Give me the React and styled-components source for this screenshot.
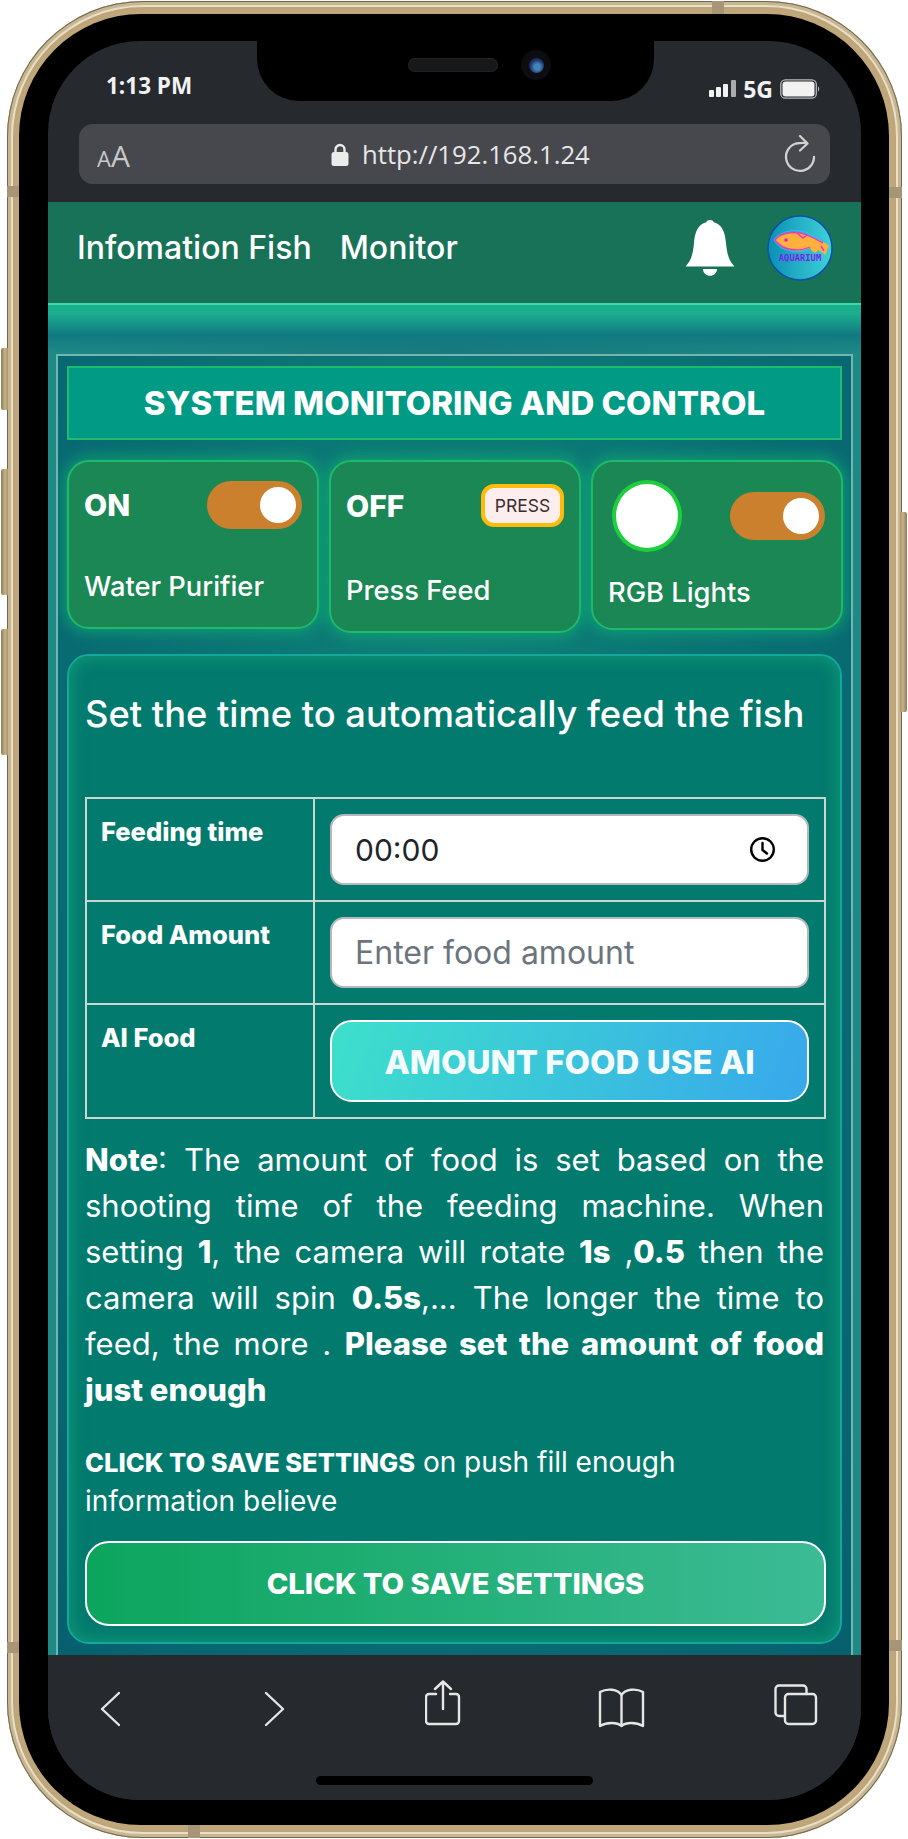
import React from "react";
import styled, { createGlobalStyle } from "styled-components";

const Global = createGlobalStyle`
  html, body { margin: 0; padding: 0; background: #fff; }
  * { box-sizing: border-box; }
  #root { width: 908px; height: 1839px; overflow: hidden; }
`;

const sans = `"Inter", "Liberation Sans", sans-serif`;
const ui = `"Open Sans", "Noto Sans", sans-serif`;

const Page = styled.div`
  position: relative;
  width: 908px;
  height: 1839px;
  padding: 1px 6px 1px 7px;
  background: #fff;
`;
const SideButton = styled.div`
  position: absolute;
  top: ${(p) => p.$top}px;
  ${(p) => (p.$right ? "right: 1px;" : "left: 1px;")}
  width: 7px;
  height: ${(p) => p.$h}px;
  background: linear-gradient(${(p) => (p.$right ? "270deg" : "90deg")}, #8d7d5f, #c9b285 60%, #a8936c);
  border-radius: ${(p) => (p.$right ? "0 2px 2px 0" : "2px 0 0 2px")};
`;
const Band = styled.div`
  position: absolute;
  z-index: 2;
  background: #a89578;
  ${(p) => p.$pos}
`;
const Frame = styled.div`
  width: 895px;
  height: 1837px;
  padding: 13px 13px 13px 12px;
  border-radius: 136px;
  background: #bfa77b;
  box-shadow: inset 0 0 0 1px #6d6755, inset 0 0 0 4px #c9b68f, inset 0 0 0 6px #e7dfca, inset 0 0 0 8px #bda577;
`;
const Bezel = styled.div`
  position: relative;
  height: 100%;
  padding: 27px 28px 25px 29px;
  border-radius: 122px;
  background: #000;
`;
const Screen = styled.div`
  height: 100%;
  display: flex;
  flex-direction: column;
  border-radius: 92px;
  overflow: hidden;
  background: #262a2e;
`;
const Notch = styled.div`
  position: absolute;
  top: 27px;
  left: 238px;
  width: 397px;
  height: 60px;
  display: flex;
  align-items: center;
  padding: 0 0 0 151px;
  gap: 23px;
  background: #000;
  border-radius: 0 0 42px 42px;
`;
const Speaker = styled.div`
  width: 90px;
  height: 14px;
  margin-top: -12px;
  border-radius: 7px;
  background: #16181a;
  box-shadow: inset 0 0 0 1px #202224;
`;
const Camera = styled.div`
  width: 30px;
  height: 30px;
  margin-top: -12px;
  border-radius: 50%;
  background: #0c0d10;
  display: flex;
  align-items: center;
  justify-content: center;
  &::after {
    content: "";
    width: 15px;
    height: 15px;
    border-radius: 50%;
    background: radial-gradient(circle at 55% 60%, #3e86b8 0 25%, #26366e 55%, #141a33 100%);
  }
`;
const TopBar = styled.div`
  height: 161px;
  flex: none;
  padding: 0 31px;
`;
const StatusRow = styled.div`
  height: 83px;
  display: flex;
  align-items: center;
  justify-content: space-between;
  padding: 5px 10px 0 27px;
  color: #f2f2f2;
  font: 700 22.500px ${ui};
`;
const StatusRight = styled.div`
  display: flex;
  align-items: center;
  gap: 7px;
  margin-top: 7px;
  font-size: 23px;
`;
const UrlBar = styled.div`
  position: relative;
  height: 60px;
  display: flex;
  align-items: center;
  justify-content: space-between;
  padding: 0 14px 0 18px;
  border-radius: 14px;
  background: #46484d;
  color: #e4e4e4;
`;
const Aa = styled.div`
  font: 400 30px ${ui};
  color: #c9c9c9;
  margin-top: 2px;
  small { font-size: 22px; }
`;
const Url = styled.div`
  position: absolute;
  left: 252px;
  top: 0;
  height: 100%;
  display: flex;
  align-items: center;
  gap: 13px;
  font: 400 25.700px ${ui};
  color: #e6e6e6;
`;
const Header = styled.header`
  height: 103px;
  flex: none;
  display: flex;
  align-items: center;
  padding: 0 28px 10px 29px;
  background: #187258;
  border-bottom: 2px solid #3bdca2;
`;
const NavLink = styled.a`
  margin-right: 28px;
  font: 500 32px ${sans};
  color: #fff;
`;
const HeaderRight = styled.div`
  margin-left: auto;
  display: flex;
  align-items: center;
  gap: 32px;
`;
const Content = styled.main`
  flex: 1;
  min-height: 0;
  padding: 49px 8px 0;
  background:
    linear-gradient(180deg, #1bae8e 0, #1bae8e 8px, #117a82 30px, rgba(17,122,130,0) 49px),
    linear-gradient(90deg, #1f8a85 0, #187a7c 50%, #1f8a85 100%);
`;
const Monitor = styled.section`
  height: 100%;
  padding: 10px 9px 0;
  background: radial-gradient(ellipse at 50% 30%, #0f8279 0, #06606f 100%);
  border: 2px solid #72b6b2;
  border-bottom: none;
  overflow: hidden;
`;
const Title = styled.h1`
  height: 74px;
  margin: 0;
  display: flex;
  align-items: center;
  justify-content: center;
  background: #019a85;
  border: 2px solid #1fbb6f;
  color: #fff;
  font: 800 33px ${sans};
  white-space: nowrap;
`;
const Cards = styled.div`
  display: grid;
  grid-template-columns: 252px 252px 252px;
  gap: 10px;
  align-items: start;
  margin-top: 20px;
`;
const Card = styled.article`
  padding: ${(p) => p.$pad};
  background: #1b8755;
  border: 2px solid #1fb96a;
  border-radius: 22px;
  box-shadow: 0 0 16px 3px rgba(16, 175, 115, 0.75);
`;
const CardRow = styled.div`
  display: flex;
  align-items: center;
  justify-content: space-between;
`;
const State = styled.span`
  font: 800 30px ${sans};
  color: #fff;
`;
const CardLabel = styled.div`
  margin-top: ${(p) => p.$gap}px;
  font: 500 27.300px/38px ${sans};
  color: #fff;
  white-space: nowrap;
`;
const Toggle = styled.div`
  width: 95px;
  height: 48px;
  display: flex;
  align-items: center;
  justify-content: flex-end;
  padding-right: 6px;
  border-radius: 24px;
  background: #cb802d;
  &::after {
    content: "";
    width: 36px;
    height: 36px;
    border-radius: 50%;
    background: #fff;
  }
`;
const PressButton = styled.button`
  width: 83px;
  height: 43px;
  padding: 0;
  border: 4px solid #ffbb0a;
  border-radius: 13px;
  background: #fdeeee;
  color: #3a2c2c;
  font: 400 17.500px ${sans};
`;
const Lamp = styled.div`
  width: 70px;
  height: 72px;
  margin-left: 4px;
  border-radius: 50%;
  background: #fff;
  border: 4px solid #1ecf3d;
`;
const Panel = styled.section`
  height: 990px;
  margin-top: 21px;
  padding: 0 16px;
  background: #027a6e;
  border: 2px solid #12a89a;
  border-radius: 22px;
  box-shadow: inset 0 0 16px 3px rgba(30, 175, 125, 0.5);
`;
const PanelTitle = styled.h2`
  margin: 0;
  height: 141px;
  padding-top: 36px;
  font: 500 36.300px/44px ${sans};
  color: #fff;
  white-space: nowrap;
`;
const Table = styled.table`
  width: 741px;
  border-collapse: collapse;
  table-layout: fixed;
  col:first-child { width: 228px; }
`;
const Th = styled.th`
  height: ${(p) => p.$h}px;
  padding: 18px 14px 12px;
  vertical-align: top;
  text-align: left;
  border: 2px solid #c9d6d2;
  font: 800 25.500px/30px ${sans};
  color: #fff;
`;
const Td = styled.td`
  padding: 15px 15px;
  vertical-align: top;
  border: 2px solid #c9d6d2;
`;
const FieldWrap = styled.div`
  position: relative;
`;
const Field = styled.input`
  display: block;
  width: 100%;
  height: 71px;
  padding: 0 23px;
  border: 2px solid #b5b9bd;
  border-radius: 14px;
  background: #fff;
  color: #212529;
  font: 400 ${(p) => p.$size}px ${sans};
  outline: none;
  &::placeholder { color: #6c757d; opacity: 1; }
`;
const ClockMark = styled.svg`
  position: absolute;
  top: 22px;
  right: 33px;
`;
const AiButton = styled.button`
  display: block;
  width: 100%;
  height: 82px;
  padding: 1px 0 0;
  border: 2px solid #fff;
  border-radius: 22px;
  background: linear-gradient(110deg, #3de0cb, #38a8ec);
  color: #f4fbfd;
  font: 800 33px ${sans};
`;
const Note = styled.div`
  margin-top: 18px;
  font: 400 31px/46px ${sans};
  color: #fff;
  b { font-weight: 800; }
`;
const NoteLine = styled.div`
  white-space: nowrap;
  text-align: justify;
  text-align-last: ${(p) => (p.$last ? "left" : "justify")};
`;
const Hint = styled.p`
  width: 690px;
  margin: 30px 0 0;
  font: 400 28px/39px ${sans};
  color: #fff;
  b { font-weight: 800; font-size: 25.500px; }
`;
const SaveButton = styled.button`
  display: block;
  width: 741px;
  height: 85px;
  margin-top: 20px;
  padding: 0;
  border: 2px solid #fff;
  border-radius: 24px;
  background: linear-gradient(90deg, #0ca55d, #3cbb95);
  color: #fff;
  font: 800 29.200px ${sans};
`;
const BottomBar = styled.nav`
  position: relative;
  height: 145px;
  flex: none;
  padding: 25px 0 0 52px;
  display: flex;
  align-items: flex-start;
  background: #262a2e;
  svg { display: block; fill: none; stroke: #e6e6e6; stroke-width: 2.4; stroke-linecap: round; stroke-linejoin: round; }
`;
const NavIcon = styled.div`
  margin: ${(p) => p.$top}px 0 0 ${(p) => p.$left}px;
`;
const HomeBar = styled.div`
  position: absolute;
  left: 268px;
  bottom: 15px;
  width: 277px;
  height: 9px;
  border-radius: 5px;
  background: #000;
`;

const Bell = () => (
  <svg width="50" height="58" viewBox="0 0 50 58">
    <circle cx="25" cy="5" r="4" fill="#fff" />
    <path fill="#fff" d="M25 3C37 3 40 13 41 24C42 35 44 42 49.500 47.500H.5C6 42 8 35 9 24C10 13 13 3 25 3Z" />
    <path fill="#fff" d="M18 50H32C32 59 18 59 18 50Z" />
  </svg>
);

const Logo = () => (
  <svg width="66" height="66" viewBox="0 0 66 66">
    <defs>
      <linearGradient id="lg" x1="0" x2="1" y1="0" y2="0">
        <stop offset="0" stopColor="#0a8fb4" />
        <stop offset="1" stopColor="#3fd2d8" />
      </linearGradient>
    </defs>
    <circle cx="33" cy="33" r="32" fill="url(#lg)" stroke="#0d50a8" strokeWidth="1.500" />
    <path d="M8 25C14 17 30 15 42 21C50 24 56 27 62 30C60 34 60 37 58 40C55 37 53 36 51 35C48 40 45 37 43 33C32 38 16 36 8 25Z" fill="#ffb13c" />
    <path d="M7 25C13 15 31 13 43 19C50 22 55 25 59 27M7 25C15 38 33 39 44 34" fill="none" stroke="#37b8f0" strokeWidth="1.200" />
    <path d="M8 25C14 17 30 15 42 21C48 23 52 26 56 28M8 25C16 36 32 37 43 32" fill="none" stroke="#ff2fc0" strokeWidth="1.300" />
    <path d="M30 18L36 23L40 20M54 31L57 36" fill="none" stroke="#ff2fc0" strokeWidth="1.500" />
    <circle cx="19" cy="25" r="1.800" fill="#d026c8" />
    <text x="33" y="46" textAnchor="middle" fontFamily="DejaVu Sans Mono, monospace" fontWeight="700" fontSize="8.800" fill="#7a1ff0">AQUARIUM</text>
  </svg>
);

const Signal = () => (
  <svg width="27" height="17" viewBox="0 0 27 17">
    <rect x="0" y="10" width="5" height="7" rx="1" fill="#f2f2f2" />
    <rect x="7" y="7" width="5" height="10" rx="1" fill="#f2f2f2" />
    <rect x="14" y="4" width="5" height="13" rx="1" fill="#f2f2f2" />
    <rect x="22" y="0" width="5" height="17" rx="1" fill="#a9abac" />
  </svg>
);

const Battery = () => (
  <svg width="40" height="20" viewBox="0 0 40 20">
    <rect x=".8" y=".8" width="35.500" height="18.400" rx="4.500" fill="none" stroke="#b9bbbd" strokeWidth="1.300" />
    <rect x="2.500" y="2.500" width="32" height="15" rx="3" fill="#f2f2f2" />
    <path d="M38 7.500C39.500 8 39.500 12 38 12.500Z" fill="#b9bbbd" />
  </svg>
);

const Lock = () => (
  <svg width="18" height="23" viewBox="0 0 18 23">
    <path d="M4.500 10V6.500a4.500 4.500 0 0 1 9 0V10" fill="none" stroke="#ececec" strokeWidth="2.400" />
    <rect x="0.500" y="9" width="17" height="14" rx="2.500" fill="#ececec" />
  </svg>
);

const Reload = () => (
  <svg width="32" height="38" viewBox="0 0 32 38" fill="none" stroke="#d0d0d0" strokeWidth="2.300" strokeLinecap="round" strokeLinejoin="round">
    <path d="M30 22A14 14 0 1 1 12 8.500Q17 7.500 23 8" />
    <path d="M16 1L23.500 8.500L16 15.500" />
  </svg>
);

const Back = () => (<svg width="20" height="36" viewBox="0 0 20 36"><path d="M19 2L2 18L19 34" /></svg>);
const Forward = () => (<svg width="21" height="36" viewBox="0 0 21 36"><path d="M2 2L19 18L2 34" /></svg>);
const Share = () => (
  <svg width="36" height="46" viewBox="0 0 36 46">
    <path d="M11 14H4a3 3 0 0 0-3 3V41a3 3 0 0 0 3 3H31a3 3 0 0 0 3-3V17a3 3 0 0 0-3-3H25" />
    <path d="M18 29V2M10 9L18 1.500L26 9" />
  </svg>
);
const Book = () => (
  <svg width="47" height="40" viewBox="0 0 47 40">
    <path d="M23.500 7C20 1 9 0 2 4V38C9 34 19 34 23.500 38C28 34 38 34 45 38V4C38 0 27 1 23.500 7Z" />
    <path d="M23.500 7V37" />
  </svg>
);
const Tabs = () => (
  <svg width="44" height="42" viewBox="0 0 44 42">
    <path d="M10 32H5a3.500 3.500 0 0 1-3.500-3.500V5A3.500 3.500 0 0 1 5 1.500H29A3.500 3.500 0 0 1 32.500 5V10" />
    <rect x="11" y="10" width="31" height="30" rx="3.500" />
  </svg>
);

export default function App() {
  return (
    <Page>
      <Global />
      <SideButton $top={348} $h={62} />
      <SideButton $top={469} $h={126} />
      <SideButton $top={629} $h={126} />
      <SideButton $top={512} $h={200} $right />
      <Band $pos="left:7px;top:186px;width:12px;height:11px;" />
      <Band $pos="right:6px;top:187px;width:13px;height:11px;" />
      <Band $pos="left:7px;top:1642px;width:12px;height:11px;" />
      <Band $pos="right:6px;top:1640px;width:13px;height:11px;" />
      <Band $pos="left:712px;top:1px;width:12px;height:13px;" />
      <Band $pos="left:188px;top:1825px;width:12px;height:13px;" />
      <Frame>
        <Bezel>
          <Notch>
            <Speaker />
            <Camera />
          </Notch>
          <Screen>
            <TopBar>
              <StatusRow>
                <span>1:13 PM</span>
                <StatusRight>
                  <Signal />
                  <span>5G</span>
                  <Battery />
                </StatusRight>
              </StatusRow>
              <UrlBar>
                <Aa><small>A</small>A</Aa>
                <Url><Lock />http://192.168.1.24</Url>
                <Reload />
              </UrlBar>
            </TopBar>
            <Header>
              <NavLink>Infomation Fish</NavLink>
              <NavLink>Monitor</NavLink>
              <HeaderRight>
                <Bell />
                <Logo />
              </HeaderRight>
            </Header>
            <Content>
              <Monitor>
                <Title>SYSTEM MONITORING AND CONTROL</Title>
                <Cards>
                  <Card $pad="19px 15px 21px">
                    <CardRow><State>ON</State><Toggle /></CardRow>
                    <CardLabel $gap={39}>Water Purifier</CardLabel>
                  </Card>
                  <Card $pad="22px 15px 21px">
                    <CardRow><State>OFF</State><PressButton>PRESS</PressButton></CardRow>
                    <CardLabel $gap={45}>Press Feed</CardLabel>
                  </Card>
                  <Card $pad="18px 16px 16px 15px">
                    <CardRow><Lamp /><Toggle /></CardRow>
                    <CardLabel $gap={22}>RGB Lights</CardLabel>
                  </Card>
                </Cards>
                <Panel>
                  <PanelTitle>Set the time to automatically feed the fish</PanelTitle>
                  <Table>
                    <colgroup><col /><col /></colgroup>
                    <tbody>
                      <tr>
                        <Th $h={103}>Feeding time</Th>
                        <Td>
                          <FieldWrap>
                            <Field type="text" $size={30} defaultValue="00:00" readOnly />
                            <ClockMark width="27" height="27" viewBox="0 0 27 27" fill="none" stroke="#000" strokeWidth="2.400" strokeLinecap="round" strokeLinejoin="round">
                              <circle cx="13.500" cy="13.500" r="11.300" />
                              <path d="M13.500 7V14L18 17.500" />
                            </ClockMark>
                          </FieldWrap>
                        </Td>
                      </tr>
                      <tr>
                        <Th $h={103}>Food Amount</Th>
                        <Td><Field type="text" $size={32} placeholder="Enter food amount" readOnly /></Td>
                      </tr>
                      <tr>
                        <Th $h={113}>AI Food</Th>
                        <Td><AiButton>AMOUNT FOOD USE AI</AiButton></Td>
                      </tr>
                    </tbody>
                  </Table>
                  <Note>
                    <NoteLine><b>Note</b>: The amount of food is set based on the</NoteLine>
                    <NoteLine>shooting time of the feeding machine. When</NoteLine>
                    <NoteLine>setting <b>1</b>, the camera will rotate <b>1s</b> ,<b>0.5</b> then the</NoteLine>
                    <NoteLine>camera will spin <b>0.5s</b>,... The longer the time to</NoteLine>
                    <NoteLine>feed, the more . <b>Please set the amount of food</b></NoteLine>
                    <NoteLine $last><b>just enough</b></NoteLine>
                  </Note>
                  <Hint><b>CLICK TO SAVE SETTINGS</b> on push fill enough information believe</Hint>
                  <SaveButton>CLICK TO SAVE SETTINGS</SaveButton>
                </Panel>
              </Monitor>
            </Content>
            <BottomBar>
              <NavIcon $top={11} $left={0}><Back /></NavIcon>
              <NavIcon $top={11} $left={144}><Forward /></NavIcon>
              <NavIcon $top={0} $left={140}><Share /></NavIcon>
              <NavIcon $top={8} $left={137}><Book /></NavIcon>
              <NavIcon $top={4} $left={129}><Tabs /></NavIcon>
              <HomeBar />
            </BottomBar>
          </Screen>
        </Bezel>
      </Frame>
    </Page>
  );
}
